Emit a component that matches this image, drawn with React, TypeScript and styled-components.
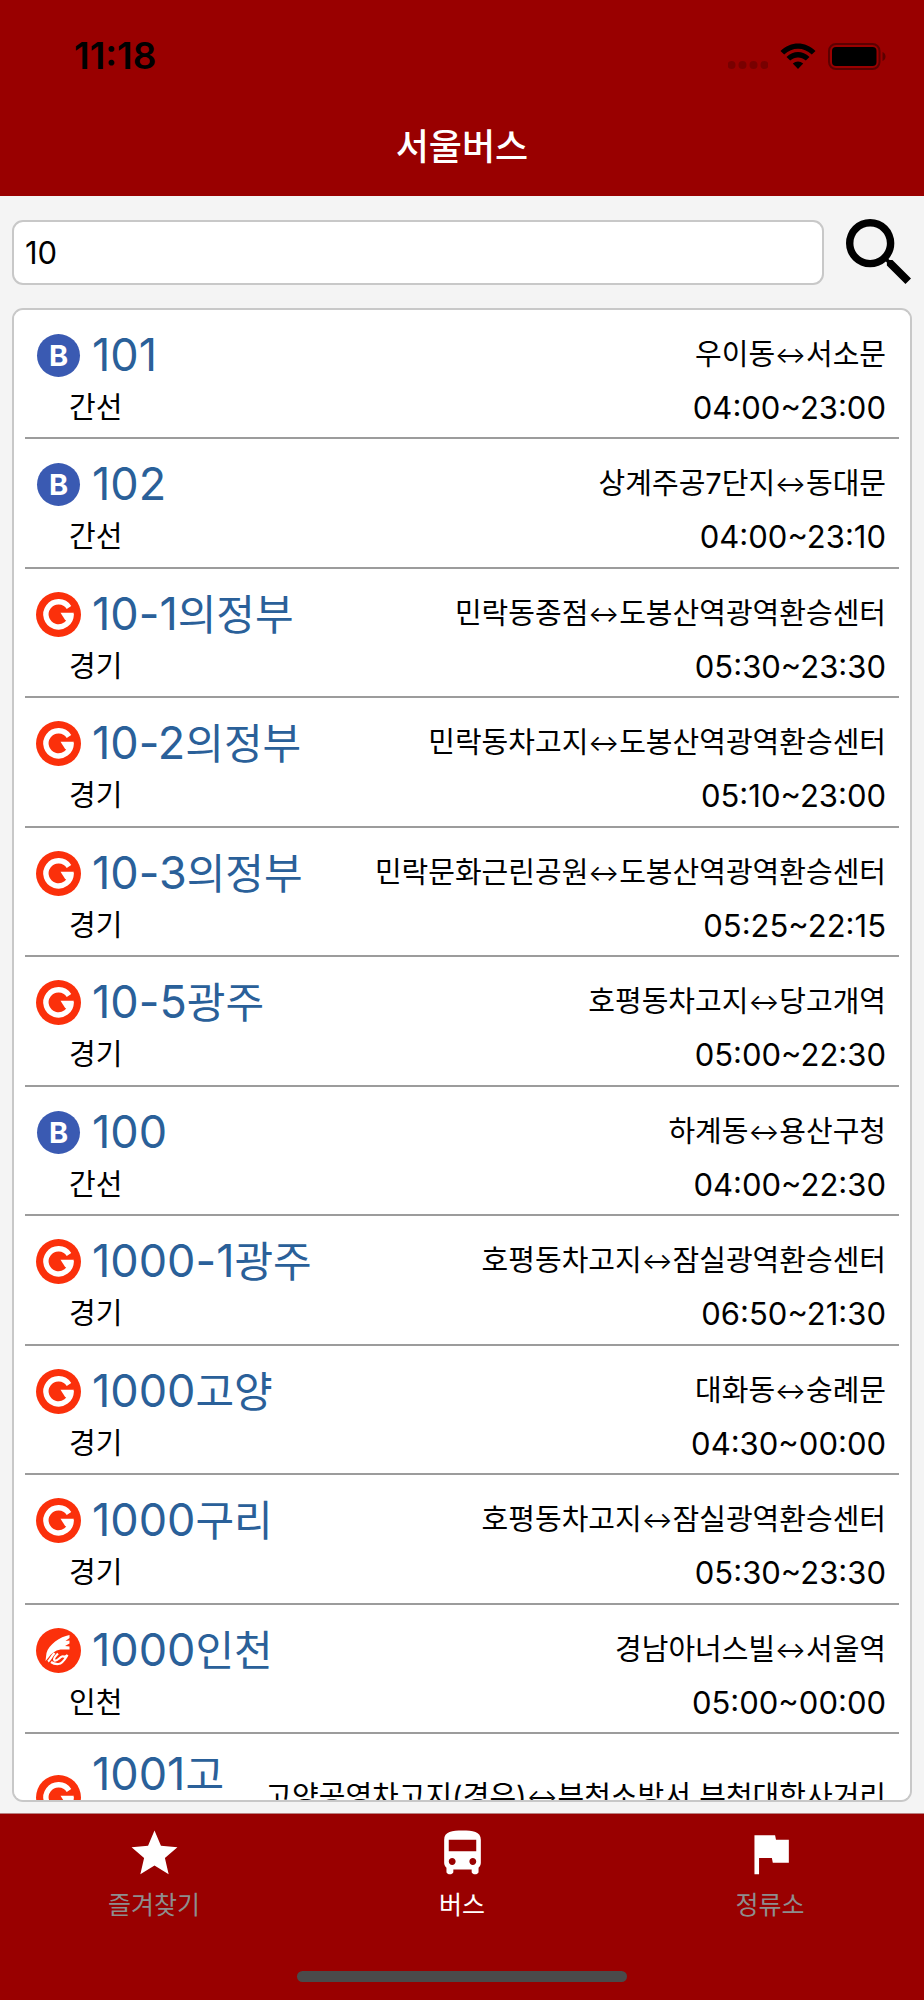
import React, { useState } from "react";
import styled, { createGlobalStyle } from "styled-components";
import { MdDirectionsBus, MdFlag, MdStar } from "react-icons/md";

const colors = {
  brand: "#990000",
  page: "#f4f4f4",
  border: "#c8c8c8",
  divider: "#9c9c9c",
  route: "#2a6099",
  muted: "#8e8e8e",
};

const GlobalStyle = createGlobalStyle`
  *, *::before, *::after { box-sizing: border-box; }
  body {
    margin: 0;
    background: ${colors.page};
    color: #000;
    font-family: Inter, "Noto Sans CJK KR", sans-serif;
  }
  h1, p, ul { margin: 0; padding: 0; }
  ul { list-style: none; }
  a { color: inherit; text-decoration: none; }
`;

const Screen = styled.div`
  display: flex;
  flex-direction: column;
  height: 100vh;
`;

const Header = styled.header`
  flex: none;
  background: ${colors.brand};
`;

const StatusBar = styled.div`
  display: flex;
  align-items: center;
  justify-content: space-between;
  height: 112px;
  padding: 0 38px 0 74px;
`;

const Clock = styled.time`
  font-size: 37px;
  line-height: 40px;
  font-weight: 600;
`;

const StatusIcons = styled.div`
  display: flex;
  align-items: center;
  gap: 12px;
`;

const Title = styled.h1`
  height: 84px;
  color: #fff;
  font-size: 36px;
  line-height: 70px;
  font-weight: 500;
  text-align: center;
`;

const Main = styled.main`
  display: flex;
  flex: 1;
  flex-direction: column;
  gap: 23px;
  min-height: 0;
  padding: 24px 12px 11px;
`;

const SearchForm = styled.form`
  display: flex;
  flex: none;
  align-items: center;
  gap: 22px;
  height: 65px;
`;

const SearchInput = styled.input`
  flex: 1;
  min-width: 0;
  height: 65px;
  padding: 0 11px;
  border: 2px solid ${colors.border};
  border-radius: 11px;
  outline: none;
  background: #fff;
  color: #000;
  font-family: inherit;
  font-size: 31px;
`;

const SearchButton = styled.button`
  display: flex;
  padding: 0 1px 2px 0;
  border: 0;
  background: none;
  color: #000;
  cursor: pointer;
`;

const ResultCard = styled.section`
  flex: 1;
  min-height: 0;
  padding: 0 11px;
  overflow-y: auto;
  scrollbar-width: none;
  border: 2px solid ${colors.border};
  border-radius: 11px;
  background: #fff;
`;

const RouteRow = styled.li`
  padding: 17px 13px 4px 11px;
  border-bottom: 2px solid ${colors.divider};

  &:nth-child(even) {
    padding-bottom: 5px;
  }
`;

const RouteHead = styled.div`
  display: flex;
  align-items: center;
  min-height: 56px;
`;

const BadgeSvg = styled.svg`
  flex: none;
  width: 45px;
  height: 45px;
  margin-right: 11px;
`;

const RouteName = styled.a`
  flex: 1;
  min-width: 0;
  color: ${colors.route};
  font-size: 45px;
  line-height: 46px;
  word-break: break-all;
`;

const Region = styled.span`
  font-size: 42px;
  line-height: 1;
`;

const Stops = styled.p`
  flex: none;
  margin-left: 12px;
  font-size: 29px;
  line-height: 40px;
  white-space: nowrap;
`;

const Arrow = styled.span`
  font-size: 23px;
  line-height: 1;
  vertical-align: 2px;
`;

const RouteFoot = styled.div`
  display: flex;
  align-items: center;
  justify-content: space-between;
  height: 50px;
  padding-left: 33px;
`;

const RouteType = styled.span`
  font-size: 29px;
  line-height: 40px;
`;

const Hours = styled.span`
  font-size: 31px;
  line-height: 40px;
`;

const TabBar = styled.nav`
  display: flex;
  flex: none;
  background: ${colors.brand};
  border-top: 1px solid #b98080;
`;

const Tab = styled.a<{ $active: boolean }>`
  display: flex;
  flex: 1;
  flex-direction: column;
  align-items: center;
  padding-top: 12px;
  color: ${(p) => (p.$active ? "#fff" : colors.muted)};
  font-size: 25px;
  line-height: 48px;

  svg {
    color: #fff;
  }
`;

const HomeArea = styled.div`
  display: flex;
  flex: none;
  align-items: flex-end;
  justify-content: center;
  height: 71px;
  padding-bottom: 18px;
  background: ${colors.brand};
`;

const HomeIndicator = styled.div`
  width: 330px;
  height: 11px;
  border-radius: 6px;
  background: #4a4a4a;
`;

type Kind = "blue" | "gyeonggi" | "incheon";

interface Route {
  number: string;
  region?: string;
  kind: Kind;
  from: string;
  to: string;
  hours: string;
}

const typeLabels: Record<Kind, string> = {
  blue: "간선",
  gyeonggi: "경기",
  incheon: "인천",
};

const routes: Route[] = [
  { number: "101", kind: "blue", from: "우이동", to: "서소문", hours: "04:00~23:00" },
  { number: "102", kind: "blue", from: "상계주공7단지", to: "동대문", hours: "04:00~23:10" },
  { number: "10-1", region: "의정부", kind: "gyeonggi", from: "민락동종점", to: "도봉산역광역환승센터", hours: "05:30~23:30" },
  { number: "10-2", region: "의정부", kind: "gyeonggi", from: "민락동차고지", to: "도봉산역광역환승센터", hours: "05:10~23:00" },
  { number: "10-3", region: "의정부", kind: "gyeonggi", from: "민락문화근린공원", to: "도봉산역광역환승센터", hours: "05:25~22:15" },
  { number: "10-5", region: "광주", kind: "gyeonggi", from: "호평동차고지", to: "당고개역", hours: "05:00~22:30" },
  { number: "100", kind: "blue", from: "하계동", to: "용산구청", hours: "04:00~22:30" },
  { number: "1000-1", region: "광주", kind: "gyeonggi", from: "호평동차고지", to: "잠실광역환승센터", hours: "06:50~21:30" },
  { number: "1000", region: "고양", kind: "gyeonggi", from: "대화동", to: "숭례문", hours: "04:30~00:00" },
  { number: "1000", region: "구리", kind: "gyeonggi", from: "호평동차고지", to: "잠실광역환승센터", hours: "05:30~23:30" },
  { number: "1000", region: "인천", kind: "incheon", from: "경남아너스빌", to: "서울역", hours: "05:00~00:00" },
  { number: "1001", region: "고양", kind: "gyeonggi", from: "고양공영차고지(경유)", to: "부천소방서.부천대학사거리", hours: "04:30~23:00" },
];

const tabs = [
  { label: "즐겨찾기", Icon: MdStar, active: false },
  { label: "버스", Icon: MdDirectionsBus, active: true },
  { label: "정류소", Icon: MdFlag, active: false },
];

function RouteBadge({ kind }: { kind: Kind }) {
  return (
    <BadgeSvg viewBox="0 0 45 45" aria-hidden="true">
      {kind === "blue" && (
        <>
          <circle cx="22.5" cy="22.5" r="21.5" fill="#3a5ab2" />
          <text
            x="22.5"
            y="33"
            fill="#fff"
            fontFamily="Inter"
            fontSize="29"
            fontWeight="700"
            textAnchor="middle"
          >
            B
          </text>
        </>
      )}
      {kind === "gyeonggi" && (
        <>
          <circle cx="22.5" cy="22.5" r="22.5" fill="#fb300b" />
          <path
            d="M33 15.4A12.6 12.6 0 1 0 35.100 22"
            fill="none"
            stroke="#fff"
            strokeWidth="5.4"
          />
          <path d="M24.500 20.800h13.300l-.8 4.500-4.500 5.500-3.500-3z" fill="#fff" />
        </>
      )}
      {kind === "incheon" && (
        <>
          <circle cx="22.5" cy="22.5" r="22.5" fill="#fb300b" />
          <path
            d="M33.5 7C24 8.500 12.500 17 10.500 25L9.500 33L12.500 29.500C15 25.500 19 22.500 24.500 21.500L33.500 21.500L33.500 18.500L29 18L33.500 15.500L33.500 12.500L29.500 13L33.500 10Z"
            fill="#fff"
          />
          <path
            d="M18.500 25C15 29 14 32 12 33.500M22 25.500C18.500 29 17 31 18.500 32.500C21 33.500 23.500 29.500 26 28.500C28.500 28 28 30 31.500 27C29 31 27 35.500 22.500 36C19 36.300 17 35.500 15 34"
            fill="none"
            stroke="#fff"
            strokeWidth="2.200"
          />
        </>
      )}
    </BadgeSvg>
  );
}

function SystemIcons() {
  return (
    <StatusIcons>
      <svg width="40" height="27" viewBox="0 0 40 27" aria-hidden="true">
        {[4, 15, 26, 37].map((x) => (
          <circle key={x} cx={x - 0.5} cy="22" r="4" fill="#780000" />
        ))}
      </svg>
      <svg width="36" height="27" viewBox="0 0 36 27" aria-hidden="true">
        <path d="M0.500 8C10.500-2 25.500-2 35.500 8L31.800 11.500C23.500 3.800 12.500 3.800 4.200 11.500Z" />
        <path d="M6.500 14C13.500 7.400 22.500 7.400 29.500 14L25.800 17.600C21 13.300 15 13.300 10.200 17.600Z" />
        <path d="M12.800 20.500C16 17.800 20 17.800 23.200 20.500L18 26Z" />
      </svg>
      <svg width="58" height="27" viewBox="0 0 58 27" aria-hidden="true">
        <rect x="1" y="1" width="50.500" height="25" rx="7" fill="none" stroke="#5c0000" strokeWidth="2" />
        <rect x="4" y="4" width="44.500" height="19" rx="4" />
        <path d="M54.500 9C58.500 10.500 58.500 16.500 54.500 18Z" fill="#5c0000" />
      </svg>
    </StatusIcons>
  );
}

export default function App() {
  const [query, setQuery] = useState("10");

  return (
    <>
      <GlobalStyle />
      <Screen>
        <Header>
          <StatusBar>
            <Clock>11:18</Clock>
            <SystemIcons />
          </StatusBar>
          <Title>서울버스</Title>
        </Header>

        <Main>
          <SearchForm role="search" onSubmit={(e) => e.preventDefault()}>
            <SearchInput
              type="text"
              aria-label="버스 번호"
              value={query}
              onChange={(e) => setQuery(e.target.value)}
            />
            <SearchButton type="submit" aria-label="검색">
              <svg width="65" height="65" viewBox="3 3 17.490 17.490" fill="currentColor" aria-hidden="true">
                <path d="M15.500 14h-.79l-.28-.27A6.471 6.471 0 0 0 16 9.500 6.500 6.500 0 1 0 9.500 16c1.610 0 3.090-.59 4.230-1.570l.27.28v.79l5 4.990L20.490 19l-4.990-5zm-6 0C7.010 14 5 11.990 5 9.500S7.010 5 9.500 5 14 7.010 14 9.500 11.990 14 9.500 14z" />
              </svg>
            </SearchButton>
          </SearchForm>

          <ResultCard>
            <ul>
              {routes.map((route) => (
                <RouteRow key={route.number + (route.region ?? "")}>
                  <RouteHead>
                    <RouteBadge kind={route.kind} />
                    <RouteName href="#route">
                      {route.number}
                      {route.region && <Region>{route.region}</Region>}
                    </RouteName>
                    <Stops>
                      {route.from}
                      <Arrow>↔</Arrow>
                      {route.to}
                    </Stops>
                  </RouteHead>
                  <RouteFoot>
                    <RouteType>{typeLabels[route.kind]}</RouteType>
                    <Hours>{route.hours}</Hours>
                  </RouteFoot>
                </RouteRow>
              ))}
            </ul>
          </ResultCard>
        </Main>

        <TabBar>
          {tabs.map(({ label, Icon, active }) => (
            <Tab key={label} href="#tab" $active={active} aria-current={active ? "page" : undefined}>
              <Icon size={55} aria-hidden="true" />
              {label}
            </Tab>
          ))}
        </TabBar>
        <HomeArea>
          <HomeIndicator />
        </HomeArea>
      </Screen>
    </>
  );
}
